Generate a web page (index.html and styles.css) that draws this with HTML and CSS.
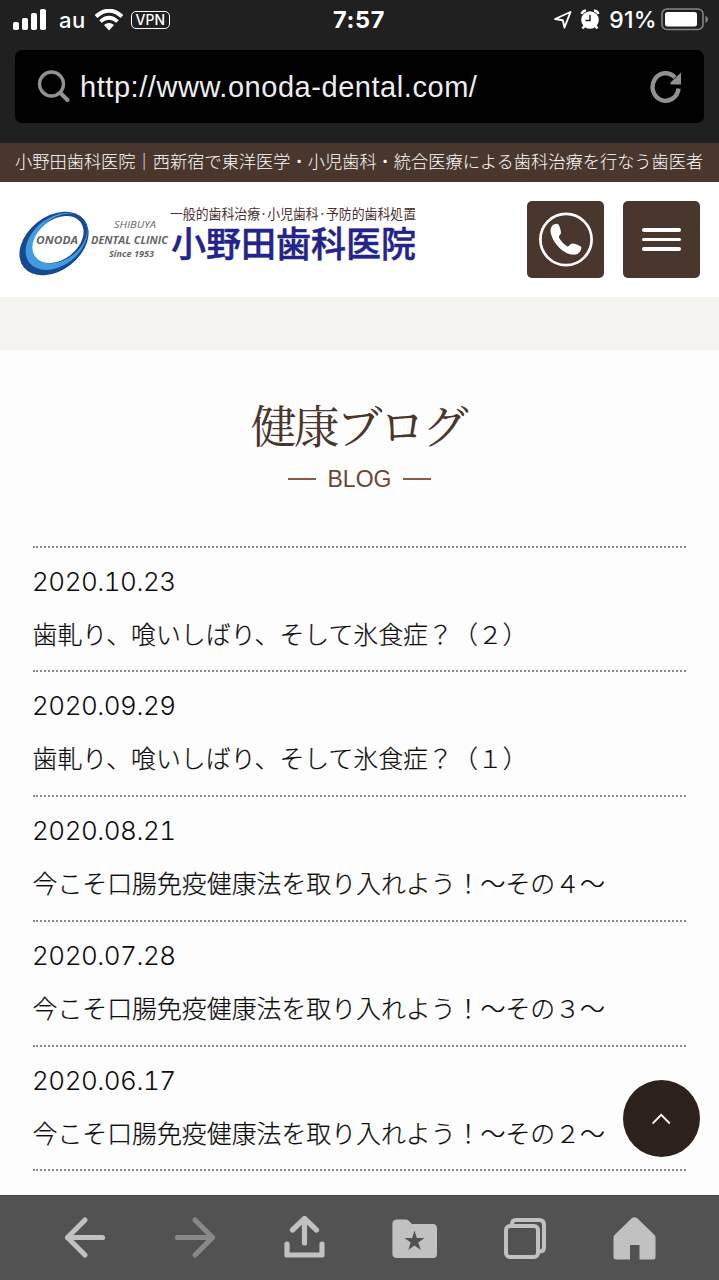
FILE: index.html
```html
<!DOCTYPE html>
<html lang="ja">

<head>
    <meta charset="UTF-8">
    <meta name="viewport" content="width=device-width, initial-scale=1.0">
    <title>小野田歯科医院</title>
    <link rel="stylesheet" href="styles.css">
</head>

<body>

    <!-- Status bar + address bar -->
    <div class="browser-top">
        <div class="status-bar">
            <div class="status-left">
                <svg class="signal" width="34" height="22" viewBox="0 0 34 22" fill="#fff">
                    <rect x="0" y="13" width="6" height="8" rx="1.8" />
                    <rect x="9" y="9" width="6" height="12" rx="1.8" />
                    <rect x="18" y="4" width="6" height="17" rx="1.8" />
                    <rect x="27" y="0" width="6" height="21" rx="1.8" />
                </svg>
                <span class="carrier">au</span>
                <svg class="wifi" width="30" height="22" viewBox="0 0 30 22">
                    <path d="M2 7.5Q15-4 28 7.5" fill="none" stroke="#fff" stroke-width="4" />
                    <path d="M6.5 12.5Q15 5 23.5 12.5" fill="none" stroke="#fff" stroke-width="3.6" />
                    <path d="M10 16Q15 12 20 16L15 21.5Z" fill="#fff" />
                </svg>
                <span class="vpn">VPN</span>
            </div>
            <span class="clock">7:57</span>
            <div class="status-right">
                <svg width="20" height="20" viewBox="0 0 20 20">
                    <path d="M2 9L17.5 2L11.5 17.5L9.8 10.2Z" fill="none" stroke="#fff" stroke-width="1.9" stroke-linejoin="round" />
                </svg>
                <svg class="alarm" width="20" height="21" viewBox="0 0 20 21">
                    <path d="M1.8 5A3.6 3.6 0 0 1 6 1.8M18.2 5A3.6 3.6 0 0 0 14 1.8M4.5 17L2.5 19.5M15.5 17L17.5 19.5" fill="none" stroke="#fff" stroke-width="2.6" />
                    <circle cx="10" cy="11" r="8.8" fill="#fff" />
                    <path d="M10 6V11.5H5.5" fill="none" stroke="#202020" stroke-width="1.5" />
                </svg>
                <span class="percent">91%</span>
                <svg class="battery" width="48" height="23" viewBox="0 0 48 23">
                    <rect x="1" y="1" width="41" height="20.5" rx="5" fill="none" stroke="#858585" stroke-width="1.6" />
                    <rect x="4" y="4" width="32" height="14.5" rx="2.5" fill="#fff" />
                    <path d="M44.5 7.5Q47 9 47 11.2Q47 13.5 44.5 15Z" fill="#858585" />
                </svg>
            </div>
        </div>

        <div class="address-bar">
            <svg width="34" height="34" viewBox="0 0 34 34" fill="none" stroke="#919191">
                <circle cx="14.5" cy="14" r="12" stroke-width="3.3" />
                <path d="M23.5 23L30.5 30" stroke-width="4" stroke-linecap="round" />
            </svg>
            <span class="url">http://www.onoda-dental.com/</span>
            <svg class="reload" width="32" height="34" viewBox="0 0 32 34">
                <path d="M28.5 18.5A13 13.8 0 1 1 25 7.5" fill="none" stroke="#919191" stroke-width="4.4" />
                <path d="M31 2.5V14.5H20.5V12.5Z" fill="#919191" />
            </svg>
        </div>
    </div>

    <!-- Site header -->
    <h1 class="site-copy">小野田歯科医院｜西新宿で東洋医学・小児歯科・統合医療による歯科治療を行なう歯医者</h1>
    <header class="site-header">
        <svg class="logo" width="400" height="80" viewBox="18 200 400 80">
            <ellipse cx="54" cy="244.5" rx="38.5" ry="27" transform="rotate(-38 54 244.5)" fill="#164a91" />
            <ellipse cx="56.5" cy="242.5" rx="34.5" ry="24" transform="rotate(-38 56.5 242.5)" fill="#439be0" />
            <ellipse cx="60" cy="239.5" rx="30" ry="21" transform="rotate(-38 60 239.5)" fill="#164a91" />
            <ellipse cx="58" cy="240.5" rx="28.5" ry="20" transform="rotate(-38 58 240.5)" fill="#fff" />
            <g class="logo-en">
                <text x="36" y="245" font-size="10.5" textLength="42" lengthAdjust="spacingAndGlyphs">ONODA</text>
                <text x="114" y="228.5" font-size="9" textLength="42" lengthAdjust="spacingAndGlyphs" class="logo-thin">SHIBUYA</text>
                <text x="91" y="245" font-size="10.5" textLength="77" lengthAdjust="spacingAndGlyphs">DENTAL CLINIC</text>
                <text x="109" y="257.5" font-size="8.5" textLength="45" lengthAdjust="spacingAndGlyphs">Since 1953</text>
            </g>
            <text class="logo-sub" x="170" y="219.5" textLength="246" lengthAdjust="spacingAndGlyphs">一般的歯科治療·小児歯科·予防的歯科処置</text>
            <text class="logo-name" x="171" y="257.5" textLength="245" lengthAdjust="spacingAndGlyphs">小野田歯科医院</text>
        </svg>
        <div class="header-buttons">
            <a class="header-btn" href="#">
                <svg class="phone" width="54" height="54" viewBox="0 0 54 54">
                    <circle cx="27" cy="26.5" r="25.6" fill="none" stroke="#fff" stroke-width="2.7" />
                    <path d="M13 13C15 11 18 10 19.5 11.5C21 14 22 18 22 20C21.5 22 19.5 22.5 20 24.5C22 28.5 25 31.5 28.5 33.5C30.5 33.5 31 30.5 33.5 30.5C36 30.5 39.5 32 42 33.5C43 36 41 39.5 38.5 41C35 42.5 31 41.5 27.5 40C20 36 14 28.5 12 21C11 18 11.5 15 13 13Z" fill="#fff" />
                </svg>
            </a>
            <a class="header-btn" href="#">
                <span class="menu-lines"><i></i><i></i><i></i></span>
            </a>
        </div>
    </header>
    <div class="texture"></div>

    <!-- Blog list -->
    <main class="blog">
        <h2 class="blog-title">健康ブログ</h2>
        <p class="blog-sub">BLOG</p>
        <ul class="blog-list">
            <li><time>2020.10.23</time><a href="#">歯軋り、喰いしばり、そして氷食症？（２）</a></li>
            <li><time>2020.09.29</time><a href="#">歯軋り、喰いしばり、そして氷食症？（１）</a></li>
            <li><time>2020.08.21</time><a href="#">今こそ口腸免疫健康法を取り入れよう！～その４～</a></li>
            <li><time>2020.07.28</time><a href="#">今こそ口腸免疫健康法を取り入れよう！～その３～</a></li>
            <li><time>2020.06.17</time><a href="#">今こそ口腸免疫健康法を取り入れよう！～その２～</a></li>
        </ul>
    </main>

    <a class="page-top" href="#">
        <svg width="20" height="12" viewBox="0 0 20 12" fill="none" stroke="#fff" stroke-width="1.8">
            <path d="M.6 10.5L9.2 1.8L17.8 10.5" />
        </svg>
    </a>

    <!-- Bottom toolbar -->
    <nav class="toolbar">
        <svg width="44" height="44" viewBox="0 0 44 44" fill="none" stroke="#c1c1c1" stroke-width="5.2" stroke-linecap="round" stroke-linejoin="round">
            <path d="M39.5 21.5H4.5M22 4L4.5 21.5L22 39" />
        </svg>
        <svg width="44" height="44" viewBox="0 0 44 44" fill="none" stroke="#888" stroke-width="5.2" stroke-linecap="round" stroke-linejoin="round">
            <path d="M4.5 21.5H39.5M22 4L39.5 21.5L22 39" />
        </svg>
        <svg width="44" height="44" viewBox="0 0 44 44" fill="none" stroke="#c1c1c1" stroke-width="5.2" stroke-linecap="round" stroke-linejoin="round">
            <path d="M22.5 27V2.5M10.5 14L22.5 2.5L34.5 14M5 28V39H40V28" />
        </svg>
        <svg width="46" height="44" viewBox="0 0 46 44">
            <path d="M5 3.5H14Q16 3.5 17.5 5.5L20 8H41Q45 8 45 12.5V37.5Q45 42 41 42H5Q.4 42 .4 37.5V8Q.4 3.5 5 3.5Z" fill="#c1c1c1" />
            <path d="M22.5 14.5L24.8 21.9H32.5L26.3 26.5L28.7 34L22.5 29.5L16.3 34L18.7 26.5L12.5 21.9H20.2Z" fill="#525252" />
        </svg>
        <svg width="44" height="44" viewBox="0 0 44 44" fill="none" stroke="#c1c1c1" stroke-width="4">
            <path d="M9 9V8Q9 4 13 4H36Q41 4 41 9V31Q41 35.5 37 35.5H36" />
            <rect x="3" y="10" width="32" height="31" rx="4" />
        </svg>
        <svg width="44" height="46" viewBox="0 0 44 46">
            <path d="M19 3Q21.5 1.3 24 3L41.5 20Q42.5 21 42.5 22.5V42Q42.5 44.5 40 44.5H26.5V30H17V44.5H3.5Q.5 44.5 .5 42V22.5Q.5 21 1.5 20Z" fill="#c1c1c1" />
        </svg>
    </nav>

</body>

</html>
```
FILE: styles.css
```css
* {
    box-sizing: border-box;
    margin: 0;
    padding: 0;
}

body {
    width: 719px;
    height: 1280px;
    display: flex;
    flex-direction: column;
    position: relative;
    overflow: hidden;
    background-color: #fdfdfd;
    color: #0c0c0c;
    font-family: "Noto Sans CJK JP", sans-serif;
    font-weight: 300;
}

a {
    color: inherit;
    text-decoration: none;
}

svg {
    display: block;
    flex-shrink: 0;
}

/*--------------Browser top-------------*/
.browser-top {
    flex: none;
    height: 143px;
    background-color: #202020;
    color: #fff;
}

.status-bar {
    display: grid;
    grid-template-columns: 1fr auto 1fr;
    align-items: center;
    height: 50px;
    padding: 0 10px 11px 13px;
    font-family: Inter, sans-serif;
    font-weight: 500;
}

.status-left,
.status-right {
    display: flex;
    align-items: center;
}

.carrier {
    margin-left: 12px;
    font-size: 22px;
    letter-spacing: 0.5px;
}

.wifi {
    margin-left: 8px;
}

.vpn {
    margin-left: 7px;
    width: 39px;
    height: 18px;
    border: 1.5px solid #fff;
    border-radius: 5px;
    font-size: 14px;
    font-weight: 500;
    line-height: 16px;
    text-align: center;
}

.clock {
    margin-left: -4px;
    font-size: 23.5px;
    font-weight: 700;
    letter-spacing: 0.7px;
}

.status-right {
    justify-content: flex-end;
}

.alarm {
    margin-left: 7px;
}

.percent {
    margin: 0 4px 0 9px;
    font-size: 23px;
    letter-spacing: 0.3px;
}

.address-bar {
    display: flex;
    align-items: center;
    height: 73px;
    margin: 0 15px;
    padding: 0 22px 0 22px;
    border-radius: 7px;
    background-color: #000;
}

.url {
    flex: 1;
    margin-left: 9px;
    padding-top: 2px;
    font-family: "Liberation Sans", sans-serif;
    font-size: 29px;
    font-weight: 400;
    letter-spacing: 0.55px;
    color: #eee;
}

/*--------------Site header-------------*/
.site-copy {
    flex: none;
    height: 39px;
    padding-left: 15px;
    background-color: #49372d;
    color: #fff;
    font-size: 17.23px;
    font-weight: 300;
    line-height: 36px;
    white-space: nowrap;
}

.site-header {
    flex: none;
    display: flex;
    justify-content: space-between;
    height: 115px;
    padding: 19px 19px 0 18px;
    background-color: #fff;
}

.logo {
    margin-top: -2px;
    overflow: visible;
}

.logo-en {
    font-family: "Open Sans", sans-serif;
    font-style: italic;
    font-weight: 700;
    fill: #666;
}

.logo-thin {
    font-weight: 500;
}

.logo-sub {
    font-size: 13.5px;
    font-weight: 400;
    fill: #4a3030;
}

.logo-name {
    font-size: 35px;
    font-weight: 500;
    fill: #23238c;
    stroke: #23238c;
    stroke-width: 0.5;
}

.header-buttons {
    display: flex;
    gap: 19px;
}

.header-btn {
    display: flex;
    align-items: center;
    justify-content: center;
    width: 77px;
    height: 77px;
    border-radius: 5px;
    background-color: #49372d;
}

.phone {
    overflow: visible;
}

.menu-lines {
    display: flex;
    flex-direction: column;
    gap: 6px;
}

.menu-lines i {
    width: 39px;
    height: 3.6px;
    border-radius: 2px;
    background-color: #fff;
}

.texture {
    flex: none;
    height: 53px;
    background-color: #f4f3ef;
}

/*--------------Blog-------------*/
.blog {
    flex: 1;
    padding: 43px 33px 0;
}

.blog-title {
    color: #49372d;
    font-family: "Noto Serif CJK JP", "Noto Sans CJK JP", serif;
    font-size: 46px;
    font-weight: 400;
    line-height: 60px;
    letter-spacing: -3px;
    text-indent: -3px;
    text-align: center;
}

.blog-sub {
    display: flex;
    align-items: center;
    justify-content: center;
    gap: 12px;
    height: 30px;
    margin: 11px 0 51.5px;
    color: #6c4635;
    font-family: "Liberation Sans", sans-serif;
    font-size: 23px;
    font-weight: 400;
}

.blog-sub::before,
.blog-sub::after {
    content: "";
    width: 28px;
    height: 2px;
    background-color: #875d47;
}

.blog-list {
    list-style: none;
    border-top: 2px dotted #8c8883;
}

.blog-list li {
    height: 124.8px;
    padding-top: 14px;
    border-bottom: 2px dotted #8c8883;
}

.blog-list time,
.blog-list a {
    display: block;
    white-space: nowrap;
}

.blog-list time {
    margin-left: -1px;
    font-family: Inter, sans-serif;
    font-size: 26px;
    font-variant-numeric: tabular-nums;
    font-kerning: none;
    letter-spacing: -0.5px;
    line-height: 40px;
}

.blog-list a {
    margin-top: 12px;
    margin-left: -0.5px;
    font-size: 24.9px;
    line-height: 38px;
    -webkit-text-stroke: 0.2px #0c0c0c;
}

/* Floating button */
.page-top {
    position: absolute;
    right: 19px;
    bottom: 123px;
    display: flex;
    align-items: center;
    justify-content: center;
    width: 77px;
    height: 77px;
    border-radius: 50%;
    background-color: #2d211b;
}

/*--------------Toolbar-------------*/
.toolbar {
    flex: none;
    display: flex;
    align-items: center;
    justify-content: space-between;
    height: 85px;
    padding: 0 62px 0 63px;
    border-top: 1px solid #454545;
    background-color: #525252;
}
```
